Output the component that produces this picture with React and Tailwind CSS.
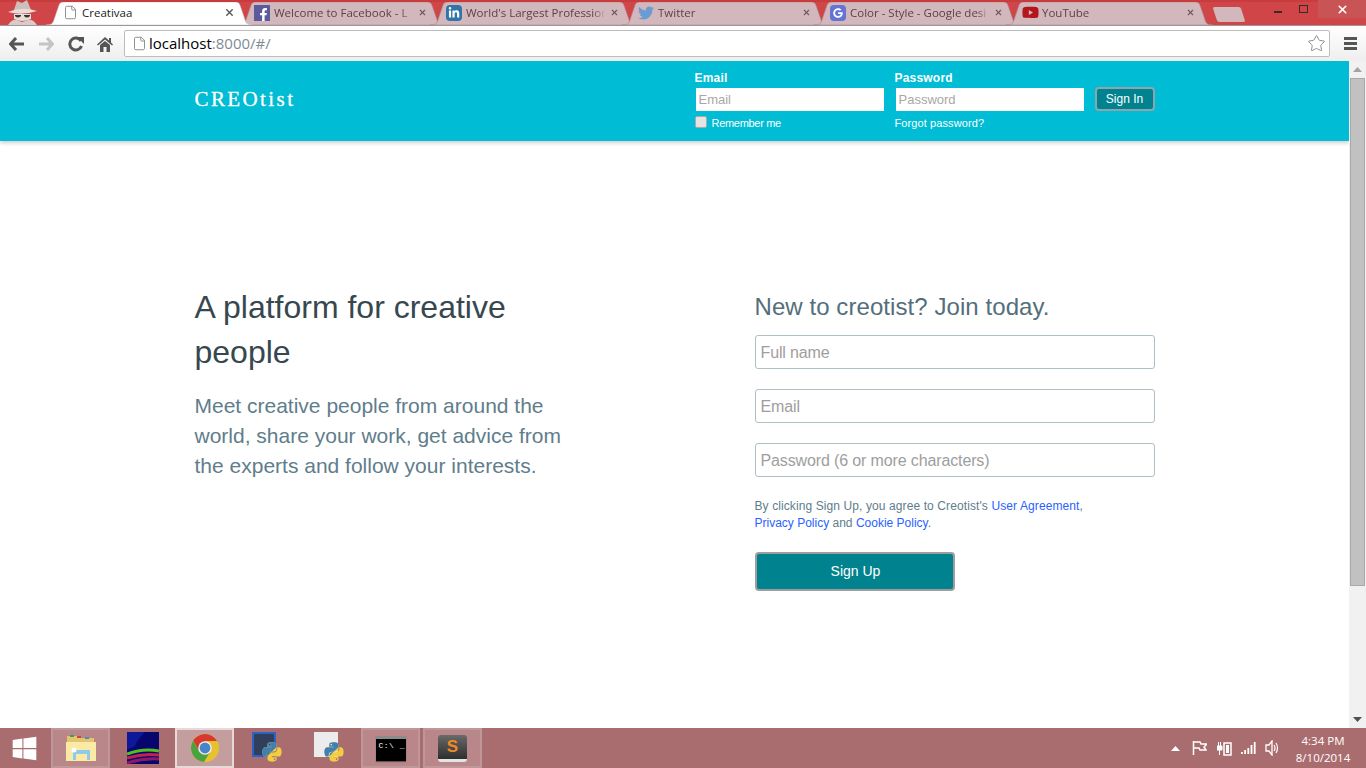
import { Star, File, X } from 'lucide-react';
import { FaFacebookF, FaLinkedinIn, FaTwitter, FaYoutube, FaGoogle, FaPython, FaWindows } from 'react-icons/fa';

const ui = 'font-["Open_Sans",sans-serif]';

const tabs = [
  { title: 'Welcome to Facebook - L', icon: <span className="flex h-4 w-4 items-end justify-end bg-[#5b5a9c] text-white"><FaFacebookF size={13} /></span> },
  { title: "World's Largest Profession", icon: <span className="flex h-4 w-4 items-center justify-center rounded-sm bg-[#2f75a8] text-white"><FaLinkedinIn size={12} /></span> },
  { title: 'Twitter', icon: <FaTwitter size={16} className="text-[#6a9bd2]" /> },
  { title: 'Color - Style - Google desi', icon: <span className="flex h-4 w-4 items-center justify-center rounded-sm bg-[#6373d6] text-white"><FaGoogle size={10} /></span> },
  { title: 'YouTube', icon: <FaYoutube size={17} className="text-[#b3161c]" /> },
];

const TabShape = ({ fill, stroke }) => (
  <svg className="absolute inset-0 h-full w-full" viewBox="0 0 210 24" preserveAspectRatio="none">
    <path d="M0 24 C6 24 7 22 8 19 L13 4 C14 1 15 0 19 0 L191 0 C195 0 196 1 197 4 L202 19 C203 22 204 24 210 24 Z" fill={fill} stroke={stroke} strokeWidth="0.6" />
  </svg>
);

const Tab = ({ title, icon }) => (
  <div className="relative -mr-[15px] h-[23px] w-[207px] shrink-0">
    <TabShape fill="#d2b7bc" stroke="#a9898d" />
    <div className="relative flex h-full items-center pb-[2px] pl-[16px] pr-[18px]">
      <span className="flex w-5 shrink-0 justify-start">{icon}</span>
      <span className="w-[144px] shrink-0 overflow-hidden whitespace-nowrap text-[11.5px] text-[#5f4046] [mask-image:linear-gradient(to_right,black_88%,transparent_97%)]">{title}</span>
      <X size={11} strokeWidth={3} className="ml-auto text-[#6c5a5d]" />
    </div>
  </div>
);

const Incognito = () => (
  <svg width="38" height="25" viewBox="0 0 38 25">
    <path d="M11 10 L14 1 L19 3 L24 0 L28 10 Z" fill="#cdbfbb" />
    <path d="M5 12 Q19 6 34 11 Q19 16 5 12 Z" fill="#e6dcd8" />
    <path d="M11 14 H28 V19 Q19 23 11 19 Z" fill="#e6dcd8" />
    <path d="M12 15 H18 V16 Q15 19 12 16 Z M21 15 H27 V16 Q24 19 21 16 Z" fill="#3a3335" />
    <path d="M5 25 Q9 19 14 20 L19 22 L25 20 Q30 19 34 25 Z" fill="#d9cbc7" />
  </svg>
);

const BackIcon = ({ flip, color }) => (
  <svg width="16" height="14" viewBox="0 0 16 14" className={flip ? 'rotate-180' : ''}>
    <path d="M7 1 L1.5 7 L7 13 M2 7 H15" fill="none" stroke={color} strokeWidth="3" />
  </svg>
);

const ReloadIcon = () => (
  <svg width="16" height="16" viewBox="0 0 16 16">
    <path d="M13 5 A6 6 0 1 0 13.5 10" fill="none" stroke="#555" strokeWidth="3" />
    <path d="M9 1 H16 V8 Z" fill="#555" />
  </svg>
);

const HomeIcon = () => (
  <svg width="16" height="16" viewBox="0 0 16 16">
    <path d="M8 1 L12 4.5 V2 H14 V6.5 L16 8.5 L15 9.5 L8 3.5 L1 9.5 L0 8.5 Z" fill="#555" />
    <path d="M3 9 L8 5 L13 9 V16 H9.5 V11 H6.5 V16 H3 Z" fill="#555" />
  </svg>
);

const ChromeLogo = () => (
  <svg width="28" height="28" viewBox="0 0 28 28">
    <circle cx="14" cy="14" r="14" fill="#e8c22c" />
    <path d="M14 7 H26.1 A14 14 0 0 0 2.2 6.5 L8 17 Z" fill="#d8392f" />
    <path d="M2.2 6.5 A14 14 0 0 0 13 28 L19 18 L8 17 Z" fill="#4ba23f" />
    <circle cx="14" cy="14" r="6.8" fill="#f1eeee" />
    <circle cx="14" cy="14" r="5.4" fill="#4a84c8" />
  </svg>
);

const FolderIcon = () => (
  <svg width="32" height="32" viewBox="0 0 32 32">
    <path d="M2 4 H12 L14 6 H29 V28 H2 Z" fill="#e3c56e" />
    <rect x="5" y="3" width="4" height="2" fill="#3da34a" />
    <rect x="12" y="4" width="4" height="2" fill="#c94a3c" />
    <rect x="20" y="5" width="4" height="2" fill="#3f8ed0" />
    <path d="M1 10 H31 V29 H1 Z" fill="#fbe9a6" />
    <path d="M8 18 H25 V28 H22 V22 H11 V28 H8 Z" fill="#8ecbe8" />
    <circle cx="9" cy="18" r="2.5" fill="#ffffff" />
  </svg>
);

const GraphicIcon = () => (
  <svg width="32" height="32" viewBox="0 0 32 32">
    <rect width="32" height="32" fill="#06066e" />
    <path d="M0 0 H18 Q10 8 8 14 L0 18 Z" fill="#0c1a9a" />
    <path d="M0 22 Q16 16 32 19" fill="none" stroke="#4fc01e" strokeWidth="3" />
    <path d="M0 26 Q16 21 32 23" fill="none" stroke="#c42052" strokeWidth="3" />
    <path d="M0 31 Q16 26 32 27" fill="none" stroke="#8a1a66" strokeWidth="3" />
  </svg>
);

const CmdIcon = () => (
  <div className='flex h-[25px] w-[30px] flex-col border-t-[3px] border-[#8b8b8b] bg-black pl-[3px] pt-[2px] font-["Liberation_Mono",monospace] text-[8px] leading-[10px] tracking-[0.5px] text-white shadow-[0_1px_1px_rgba(0,0,0,0.4)]'>
    C:\ _
  </div>
);

const SublimeIcon = () => (
  <span className='flex h-[27px] w-[29px] items-center justify-center rounded-[3px] border-b-[3px] border-[#e4e4e4] bg-gradient-to-b from-[#6a6a6a] to-[#2e2e2e] font-["Liberation_Sans",sans-serif] text-[17px] font-bold text-[#f08a24]'>
    S
  </span>
);

const TaskItem = ({ children, state }) => {
  const box =
    state === 'active'
      ? 'border-2 border-[#e8d8d8] bg-[#c49d9f]'
      : state === 'open'
      ? 'border-2 border-[#c09799] bg-[#b98789]'
      : 'border-2 border-transparent';
  return <div className={`flex h-[40px] w-[59px] shrink-0 items-center justify-center ${box}`}>{children}</div>;
};

const PythonIcon = ({ paper }) => (
  <div className="relative h-8 w-8">
    <div className={`absolute left-[1px] top-0 h-[25px] w-[24px] ${paper ? 'bg-[#ececec]' : 'border-2 border-[#2a62c8] bg-[#2f3f5c]'}`} />
    <FaPython size={22} className="absolute bottom-[1px] right-0 text-[#f4cc42]" />
    <FaPython size={22} className="absolute bottom-[1px] right-0 text-[#3f7fb5] [clip-path:polygon(0_0,100%_0,0_100%)]" />
  </div>
);

const Triangle = ({ down }) => (
  <svg width="9" height="5" viewBox="0 0 9 5" className={down ? 'rotate-180' : ''}>
    <path d="M4.5 0 L9 5 H0 Z" fill={down ? '#505050' : '#a3a3a3'} />
  </svg>
);

const TextField = ({ placeholder }) => (
  <input
    type="text"
    placeholder={placeholder}
    className="h-[34px] w-[400px] rounded-[3px] border border-[#b0bec5] bg-white px-[5px] pt-[2px] text-[16px] tracking-[-0.13px] text-[#37474f] outline-none placeholder:text-[#9e9e9e]"
  />
);

const HeaderField = ({ label, placeholder, children }) => (
  <div className="w-[200px]">
    <label className="block text-[12px] font-bold leading-[14px] tracking-[0.2px] text-white">{label}</label>
    <input
      type="text"
      placeholder={placeholder}
      className="ml-px mt-[3px] block h-[23px] w-[188px] bg-white px-[3px] text-[13px] outline-none placeholder:text-[#a8a8a8]"
    />
    <div className="mt-[6px] flex h-[12px] items-center text-[11px] leading-[12px] text-white">{children}</div>
  </div>
);

export default function App() {
  return (
    <div className='flex h-screen w-full flex-col overflow-hidden bg-white font-["Liberation_Sans",Arial,sans-serif]'>
      {/* browser chrome */}
      <div className="relative flex h-[25px] shrink-0 items-end border-t-2 border-[#c83c3e] bg-[#d04648]">
        <div className="absolute left-[3px] top-[-2px]"><Incognito /></div>
        <div className="ml-[46px] flex items-end">
          <div className={`relative z-10 -mr-[15px] h-[23px] w-[207px] shrink-0 ${ui}`}>
            <TabShape fill="#ffffff" stroke="#c9c9c9" />
            <div className="relative flex h-full items-center pb-[2px] pl-[17px] pr-[18px]">
              <File size={15} strokeWidth={1.5} className="text-[#8a8a8a]" />
              <span className="ml-[4px] text-[11.5px] text-[#222]">Creativaa</span>
              <X size={11} strokeWidth={3} className="ml-auto text-[#555]" />
            </div>
          </div>
          <div className={`flex items-end ${ui}`}>
            {tabs.map((t) => (
              <Tab key={t.title} title={t.title} icon={t.icon} />
            ))}
          </div>
          <div className="mb-[3px] ml-[17px] h-[15px] w-[28px] skew-x-[18deg] rounded-[2px] bg-[#d2b7bc]" />
        </div>
        <div className="absolute right-0 top-[-2px] flex h-[18px] items-center text-white">
          <div className="flex w-[20px] justify-center pt-[6px]"><div className="h-[2px] w-[8px] bg-[#3a2a2a]" /></div>
          <div className="flex w-[30px] justify-center pb-[1px]"><div className="h-[8px] w-[9px] border-[1.5px] border-[#3a2a2a]" /></div>
          <div className="flex w-[48px] items-center justify-center self-stretch bg-[#c85456]"><X size={13} strokeWidth={3} /></div>
        </div>
      </div>
      <div className="flex h-[36px] shrink-0 items-center border-t border-[#a0969a] bg-gradient-to-b from-white to-[#eeeeee] pl-[9px] pr-[9px]">
        <BackIcon color="#555" />
        <span className="ml-[13px]"><BackIcon flip color="#c4c4c4" /></span>
        <span className="ml-[14px]"><ReloadIcon /></span>
        <span className="ml-[13px]"><HomeIcon /></span>
        <div className="ml-[11px] flex h-[27px] w-[1206px] items-center rounded-[2px] border border-[#bdbdbd] bg-white pl-[7px] pr-[3px]">
          <File size={15} strokeWidth={1.5} className="text-[#8a8a8a]" />
          <span className={`ml-[2px] text-[15px] text-black ${ui}`}>localhost<span className="text-[#7f8c95]">:8000/#/</span></span>
          <Star size={19} strokeWidth={1.2} className="ml-auto text-[#8a8a8a]" />
        </div>
        <div className="ml-[14px] flex flex-col gap-[2px]">
          <div className="h-[3px] w-[13px] bg-[#555]" />
          <div className="h-[3px] w-[13px] bg-[#555]" />
          <div className="h-[3px] w-[13px] bg-[#555]" />
        </div>
      </div>

      <div className="flex min-h-0 flex-1">
        <div className="min-w-0 flex-1 overflow-hidden">
          <header className="h-[80px] bg-[#00bcd4] shadow-[0_2px_4px_rgba(0,0,0,0.2)]">
            <div className="mx-auto flex h-full w-[960px] items-center justify-between">
              <div className='pb-[2px] text-[21px] tracking-[2.4px] text-white [-webkit-text-stroke:0.3px_white] font-["Liberation_Serif",serif]'>CREOtist</div>
              <div className="flex h-full w-[460px] pt-[10px]">
                <HeaderField label="Email" placeholder="Email">
                  <input type="checkbox" className="mb-[2px] h-[12px] w-[12px] appearance-none rounded-[2px] border border-[#aaa] bg-[#e4e4e4]" />
                  <span className="ml-[5px] tracking-[-0.3px]">Remember me</span>
                </HeaderField>
                <HeaderField label="Password" placeholder="Password">
                  <span className="tracking-[0.1px]">Forgot password?</span>
                </HeaderField>
                <button className="mt-[16px] h-[24px] w-[60px] rounded-[4px] border-2 border-[#90a4ae] bg-[#00838f] text-[12px] text-white">Sign In</button>
              </div>
            </div>
          </header>

          <main className="mx-auto flex w-[960px] justify-between pt-[143px]">
            <section className="w-[400px] pt-px">
              <h1 className="w-[340px] text-[32px] font-normal leading-[45px] text-[#37474f]">A platform for creative people</h1>
              <p className="mt-[16px] w-[380px] text-[21px] leading-[30px] text-[#607d8b]">Meet creative people from around the world, share your work, get advice from the experts and follow your interests.</p>
            </section>
            <section className="w-[400px]">
              <h2 className="text-[24px] font-normal leading-[45px] tracking-[0.07px] text-[#546e7a]">New to creotist? Join today.</h2>
              <div className="mt-[6px] flex flex-col gap-[20px]">
                <TextField placeholder="Full name" />
                <TextField placeholder="Email" />
                <TextField placeholder="Password (6 or more characters)" />
              </div>
              <p className="mt-[21px] text-[12px] leading-[17px] text-[#607d8b]">
                <span className="tracking-[0.1px]">By clicking Sign Up, you agree to Creotist's <a className="text-[#2962ff]">User Agreement</a>,</span><br />
                <a className="text-[#2962ff]">Privacy Policy</a> and <a className="text-[#2962ff]">Cookie Policy</a>.
              </p>
              <button className="mt-[20px] h-[39px] w-[200px] rounded-[4px] border-2 border-[#9e9e9e] bg-[#00838f] pl-[2px] text-[14px] text-white">Sign Up</button>
            </section>
          </main>
        </div>
        {/* scrollbar */}
        <div className="flex w-[17px] shrink-0 flex-col bg-[#f1f1f1]">
          <div className="flex h-[17px] items-center justify-center"><Triangle /></div>
          <div className="ml-px h-[508px] w-[15px] border border-[#a8a8a8] bg-[#c1c1c1]" />
          <div className="mt-auto flex h-[17px] items-center justify-center"><Triangle down /></div>
        </div>
      </div>

      {/* taskbar */}
      <div className={`flex h-[40px] shrink-0 items-center bg-[#aa6d6f] ${ui}`}>
        <div className="flex w-[51px] justify-center pr-[2px]"><FaWindows size={27} className="text-white" /></div>
        <div className="flex gap-[3px]">
          <TaskItem state="open"><FolderIcon /></TaskItem>
          <TaskItem><GraphicIcon /></TaskItem>
          <TaskItem state="active"><ChromeLogo /></TaskItem>
          <TaskItem><PythonIcon /></TaskItem>
          <TaskItem><PythonIcon paper /></TaskItem>
          <TaskItem state="open"><CmdIcon /></TaskItem>
          <TaskItem state="open"><SublimeIcon /></TaskItem>
        </div>
        <div className="ml-auto flex items-center pr-[17px] text-white">
          <svg width="9" height="5" viewBox="0 0 9 5"><path d="M4.5 0 L9 5 H0 Z" fill="#fff" /></svg>
          <svg width="15" height="16" viewBox="0 0 15 16" className="ml-[12px]"><path d="M1.5 1 V15 M2 2 H8 L9 4 H15 L12 7 L14 10 H8 L7 8 H2" fill="none" stroke="#fff" strokeWidth="1.5" /></svg>
          <svg width="15" height="16" viewBox="0 0 15 16" className="ml-[10px]"><path d="M0 6 H5 V10 H0 Z M1.5 2 V6 M3.5 2 V6 M2.5 10 V15" stroke="#fff" fill="#fff" /><rect x="7" y="3" width="7" height="12" fill="none" stroke="#fff" strokeWidth="1.5" /><rect x="9" y="5" width="3" height="8" fill="#fff" /></svg>
          <svg width="15" height="12" viewBox="0 0 15 12" className="ml-[9px]"><path d="M0 10 h1.8 v2 h-1.8 Z M3.2 8 h1.8 v4 h-1.8 Z M6.4 6 h1.8 v6 h-1.8 Z M9.6 3 h1.8 v9 h-1.8 Z M12.8 0 h1.8 v12 h-1.8 Z" fill="#fff" /></svg>
          <svg width="14" height="16" viewBox="0 0 14 16" className="ml-[9px]"><path d="M1 5 H4 L7 1 V15 L4 11 H1 Z" fill="none" stroke="#fff" strokeWidth="1.3" /><path d="M9 5 Q11 8 9 11 M11 3 Q14 8 11 13" fill="none" stroke="#fff" strokeWidth="1.2" /></svg>
          <div className="ml-[18px] flex w-[52px] flex-col items-center pt-[1px] text-[11.5px] leading-[17px]">
            <span>4:34 PM</span>
            <span>8/10/2014</span>
          </div>
        </div>
      </div>
    </div>
  );
}
